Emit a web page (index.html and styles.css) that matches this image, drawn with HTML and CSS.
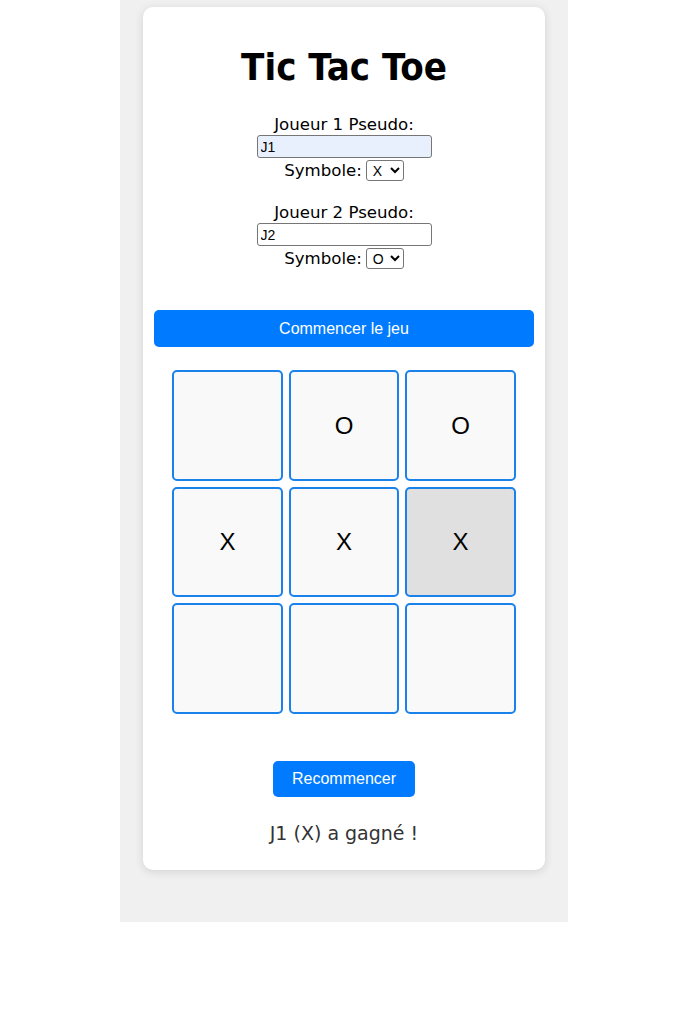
FILE: index.html
```html
<!DOCTYPE html>
<html lang="fr">
<head>
<meta charset="utf-8">
<title>Tic Tac Toe</title>
<link rel="stylesheet" href="styles.css">
</head>
<body>
<div class="page">
  <div class="card">
    <h1 class="title">Tic Tac Toe</h1>
    <div class="player">
      <label class="label" for="p1">Joueur 1 Pseudo:</label>
      <input class="pseudo pseudo-filled" id="p1" type="text" value="J1">
      <div class="symbol-row">
        <span class="label">Symbole:</span>
        <select class="symbol"><option>X</option><option>O</option></select>
      </div>
    </div>
    <div class="player">
      <label class="label" for="p2">Joueur 2 Pseudo:</label>
      <input class="pseudo" id="p2" type="text" value="J2">
      <div class="symbol-row">
        <span class="label">Symbole:</span>
        <select class="symbol"><option>O</option><option>X</option></select>
      </div>
    </div>
    <button class="btn btn-start">Commencer le jeu</button>
    <div class="board">
      <button class="cell"></button>
      <button class="cell">O</button>
      <button class="cell">O</button>
      <button class="cell">X</button>
      <button class="cell">X</button>
      <button class="cell cell-hover">X</button>
      <button class="cell"></button>
      <button class="cell"></button>
      <button class="cell"></button>
    </div>
    <div class="actions">
      <button class="btn btn-restart">Recommencer</button>
    </div>
    <p class="status">J1 (X) a gagné !</p>
  </div>
</div>
</body>
</html>
```

FILE: styles.css
```css
html, body {
  margin: 0;
  padding: 0;
  background: #ffffff;
}

body {
  font-family: "DejaVu Sans", Verdana, sans-serif;
  padding-right: 1px;
}

.page {
  width: 448px;
  height: 922px;
  margin: 0 auto;
  background: #f0f0f0;
  padding: 7px 23px 0;
  box-sizing: border-box;
}

.card {
  background: #ffffff;
  border-radius: 10px;
  box-shadow: 0 2px 10px rgba(0, 0, 0, 0.12);
  padding: 0 11px 25px;
  display: flex;
  flex-direction: column;
  align-items: center;
}

.title {
  font-family: "DejaVu Sans Condensed", "DejaVu Sans", sans-serif;
  font-weight: bold;
  font-size: 38px;
  line-height: 44px;
  margin: 38px 0 0;
  color: #000;
}

.player {
  display: flex;
  flex-direction: column;
  align-items: center;
  margin-top: 26px;
}

.player + .player {
  margin-top: 20px;
}

.label {
  font-size: 16.6px;
  line-height: 20px;
  color: #000;
}

.pseudo {
  width: 175px;
  height: 23px;
  box-sizing: border-box;
  border: 1px solid #767676;
  border-radius: 3px;
  padding: 1px 3px;
  font-family: "Liberation Sans", Arial, sans-serif;
  font-size: 14px;
  background: #ffffff;
  color: #000;
}

.pseudo-filled {
  background: #e8f0fe;
}

.symbol-row {
  display: flex;
  align-items: center;
  gap: 4px;
  height: 25px;
}

.symbol {
  height: 21px;
  width: 38px;
  font-family: "Liberation Sans", Arial, sans-serif;
  font-size: 14px;
  border: 1px solid #767676;
  border-radius: 3px;
  background: #fff;
  padding: 0 0 0 2px;
}

.btn {
  background: #007bff;
  color: #ffffff;
  border: none;
  border-radius: 5px;
  font-family: "Liberation Sans", Arial, sans-serif;
  font-size: 16px;
  cursor: pointer;
}

.btn-start {
  align-self: stretch;
  height: 37px;
  margin-top: 39px;
}

.board {
  display: grid;
  grid-template-columns: 111px 110px 111px;
  grid-template-rows: 111px 110px 111px;
  gap: 6px;
  margin-top: 23px;
}

.cell {
  border: 2px solid #1a82ea;
  border-radius: 5px;
  background: #f9f9f9;
  font-family: "Liberation Sans", Arial, sans-serif;
  font-size: 24px;
  color: #000;
  padding: 0;
}

.cell-hover {
  background: #e0e0e0;
}

.actions {
  margin-top: 47px;
}

.btn-restart {
  width: 142px;
  height: 36px;
}

.status {
  font-size: 19px;
  line-height: 24px;
  color: #333;
  margin: 24px 0 0;
}
```
